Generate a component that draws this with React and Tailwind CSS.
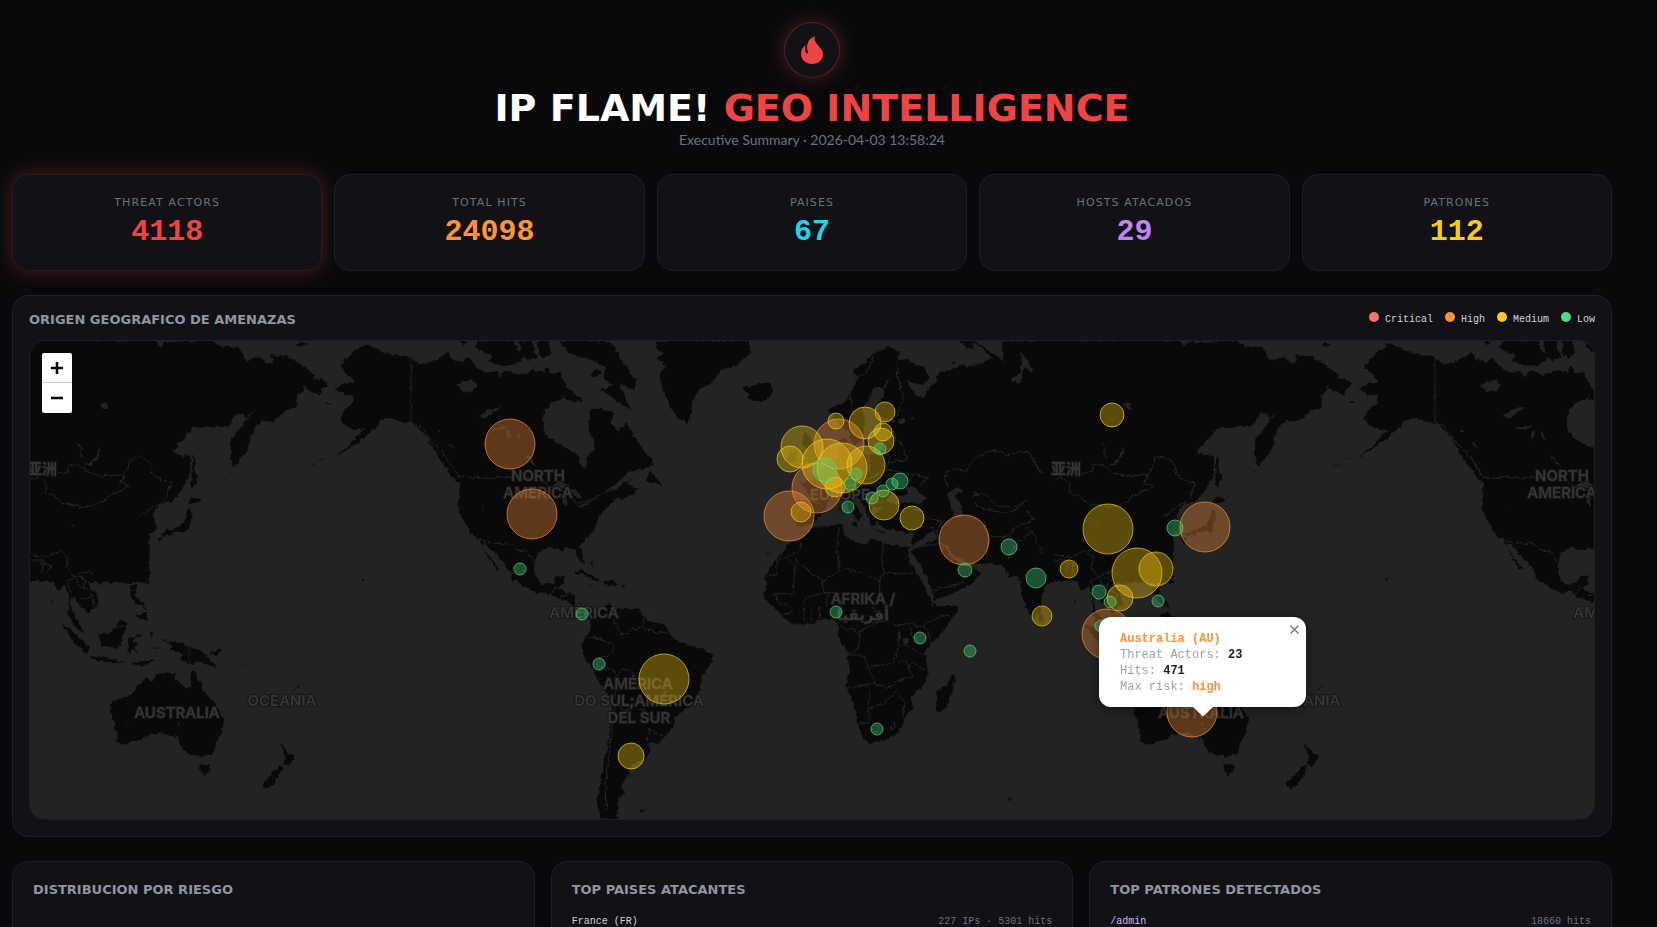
import { useState } from "react";

const stats = [
  { label: "Threat Actors", value: 4118, color: "text-[#ef4444]", glow: true },
  { label: "Total Hits", value: 24098, color: "text-[#ff9336]" },
  { label: "Paises", value: 67, color: "text-[#22d3ee]" },
  { label: "Hosts Atacados", value: 29, color: "text-[#c084fc]" },
  { label: "Patrones", value: 112, color: "text-[#facc15]" },
];

const legend = [
  { label: "Critical", color: "bg-[#f87171]" },
  { label: "High", color: "bg-[#fb923c]" },
  { label: "Medium", color: "bg-[#facc15]" },
  { label: "Low", color: "bg-[#4ade80]" },
];

const riskColors = {
  high: "#fb923c",
  medium: "#facc15",
  low: "#4ade80",
};

// [x, y, radius, risk]
const markers = [
  [787, 147, 25, "high"],
  [809, 103, 25, "high"],
  [759, 175, 25, "high"],
  [480, 103, 25, "high"],
  [502, 173, 25, "high"],
  [934, 199, 25, "high"],
  [1077, 293, 25, "high"],
  [1175, 186, 25, "high"],
  [1162, 371, 25, "high"],
  [797, 123, 25, "medium"],
  [812, 127, 25, "medium"],
  [634, 338, 25, "medium"],
  [1078, 188, 25, "medium"],
  [1107, 232, 25, "medium"],
  [772, 106, 21, "medium"],
  [836, 124, 19, "medium"],
  [1126, 228, 17, "medium"],
  [835, 82, 16, "medium"],
  [854, 164, 15, "medium"],
  [601, 415, 13, "medium"],
  [760, 118, 13, "medium"],
  [851, 100, 13, "medium"],
  [1090, 257, 13, "medium"],
  [882, 177, 12, "medium"],
  [1082, 74, 12, "medium"],
  [855, 71, 10, "medium"],
  [805, 146, 10, "medium"],
  [771, 171, 10, "medium"],
  [1012, 275, 10, "medium"],
  [1039, 228, 9, "medium"],
  [853, 91, 9, "medium"],
  [806, 80, 8, "medium"],
  [795, 129, 12, "low"],
  [1006, 237, 10, "low"],
  [979, 206, 8, "low"],
  [870, 140, 8, "low"],
  [1145, 187, 8, "low"],
  [935, 229, 7, "low"],
  [1069, 251, 7, "low"],
  [490, 228, 6, "low"],
  [552, 273, 6, "low"],
  [569, 323, 6, "low"],
  [850, 108, 6, "low"],
  [826, 133, 6, "low"],
  [820, 143, 6, "low"],
  [818, 166, 6, "low"],
  [842, 157, 6, "low"],
  [853, 150, 6, "low"],
  [862, 143, 6, "low"],
  [1080, 261, 6, "low"],
  [1128, 260, 6, "low"],
  [1071, 285, 6, "low"],
  [806, 271, 6, "low"],
  [890, 297, 6, "low"],
  [940, 310, 6, "low"],
  [847, 388, 6, "low"],
];

const mapLabels = [
  [508, 140, "NORTH"],
  [508, 157, "AMERICA"],
  [554, 277, "AMÉRICA"],
  [608, 348, "AMÉRICA"],
  [609, 365, "DO SUL;AMÉRICA"],
  [609, 382, "DEL SUR"],
  [810, 159, "EUROPE"],
  [833, 263, "AFRIKA /"],
  [833, 279, "أفريقيا"],
  [1036, 133, "亚洲"],
  [1171, 377, "AUSTRALIA"],
  [1276, 365, "OCEANIA"],
];

const LAND = "#090909";
const WATER = "#232323";
const BORDER = "#262626";

function FlameIcon() {
  return (
    <svg className="h-7 w-[22px]" viewBox="0 0 66 84" fill="#ef4444" aria-hidden="true">
      <path d="M42 0C38 14 46 22 54 31C62 40 66 47 66 54C66 72 51 84 33 84C15 84 0 71 0 54C0 43 5 33 14 27C11 37 11 47 16 51C20 54 22 50 20 45C14 26 22 8 42 0Z" />
    </svg>
  );
}

// Each continent group is drawn on its own 3x grid
function Americas() {
  return (
    <g transform="translate(370 -11) scale(0.33333)">
      <g fill={LAND}>
        <path d="M-180 110L-165 88L-145 76L-140 62L-120 55L-100 42L-80 52L-55 62L-20 74L20 77L33 86L60 100L80 103L110 86L145 66L155 90L175 92L185 98L205 82L225 108L255 128L290 124L300 140L320 120L360 135L400 120L430 128L440 110L455 130L480 125L490 150L500 165L495 190L480 210L455 218L436 240L428 270L430 300L447 325L470 335L495 350L530 372L548 412L560 410L562 380L582 360L582 330L565 300L568 270L570 238L600 236L640 248L635 280L655 305L680 278L690 300L720 345L740 378L760 385L760 405L730 418L690 425L660 450L640 470L620 490L645 480L690 448L705 440L690 462L705 478L722 475L700 488L665 510L650 505L640 515L620 535L600 550L590 575L585 600L560 625L540 650L552 695L542 700L525 655L500 655L480 660L440 652L410 670L402 705L405 740L425 765L460 760L470 740L495 738L488 765L470 775L500 788L525 795L525 830L545 850L575 860L590 840L610 832L630 822L635 832L660 835L715 835L725 852L750 875L790 880L810 910L825 930L860 945L900 952L935 970L938 995L905 1035L902 1080L885 1120L850 1140L825 1160L820 1190L790 1225L770 1243L740 1238L750 1260L740 1285L700 1300L685 1320L690 1335L660 1365L672 1385L655 1410L650 1440L655 1468L605 1468L590 1420L600 1370L610 1300L625 1240L632 1180L635 1110L600 1060L580 1020L545 970L548 935L570 905L575 870L545 860L520 828L500 812L460 800L440 785L415 788L380 775L335 745L335 730L295 680L255 640L245 645L275 690L300 718L290 718L265 685L240 630L215 615L185 560L175 535L180 460L150 430L120 390L80 320L40 280L33 278L0 275L-35 262L-60 272L-75 295L-110 325L-160 360L-200 385L-150 345L-120 310L-105 298L-135 300L-165 285L-180 270L-172 245L-140 220L-140 195L-170 195L-195 178L-165 160L-135 155L-150 140Z" />
        <path d="M225 50L235 36L270 32L345 32L350 60L372 70L362 95L340 105L310 108L265 95L275 75L240 62Z" />
        <path d="M178 32L205 32L190 46Z" />
        <path d="M358 32L398 32L402 60L412 80L385 92L365 70Z" />
        <path d="M415 32L445 32L452 70L432 85L414 72Z" />
        <path d="M475 32L610 32L642 50L662 90L710 150L705 182L680 170L660 160L690 235L665 225L635 200L598 180L640 165L612 148L615 110L575 90L540 82L505 65Z" />
        <path d="M498 165L520 190L550 212L520 215L492 205Z" />
        <path d="M768 32L1050 32L1050 70L1010 105L965 120L940 155L895 180L880 210L866 280L830 262L805 220L790 180L780 130L800 110L770 85L790 70L768 55Z" />
        <path d="M1030 168L1050 172L1075 160L1105 157L1120 180L1105 205L1075 217L1045 208L1058 192L1035 185Z" />
        <path d="M518 727L540 720L570 732L602 752L585 752L555 735Z" />
        <path d="M612 753L640 752L656 765L632 768L612 764Z" />
        <path d="M568 765L584 766L575 769ZM664 764L676 765L670 769Z" />
        <path d="M735 455L752 420L762 435L785 465L770 462L755 458Z" />
        <path d="M152 428L185 450L178 455L155 440Z" />
        <path d="M570 135L590 115L608 130L590 140ZM575 690L580 715L572 700Z" />
        <path d="M720 1440L740 1438L728 1446ZM-112 740L-105 756L-118 752Z" />
        <path d="M-230 385L-250 390L-232 382ZM-255 405L-272 407L-258 402Z" />
        <path d="M-310 45L-295 35L-280 44L-300 50ZM-225 215L-205 218L-215 222Z" />
      </g>
      <g fill={WATER}>
        <path d="M168 165L190 155L215 148L230 165L215 185L190 185Z" />
        <path d="M235 258L265 240L305 230L275 250L255 264Z" />
        <path d="M270 295L300 290L330 285L300 300ZM320 310L330 300L328 330ZM350 300L365 330L352 325Z" />
        <path d="M376 375L392 385L412 412L398 405Z" />
        <path d="M450 470L480 455L512 465L495 475L470 478Z" />
        <path d="M488 490L500 488L498 528L487 520Z" />
        <path d="M505 480L530 478L545 500L528 502Z" />
        <path d="M527 530L555 520L578 515L550 530Z" />
        <path d="M680 440L705 435L735 440L725 462L690 465Z" opacity="0.7" />
        <path d="M540 245L560 240L562 300L540 280Z" />
        <path d="M110 300L122 310L118 300ZM145 345L165 355L150 340ZM245 535L252 545L248 532Z" />
      </g>
      <g fill="none" stroke={BORDER} strokeWidth="3">
        <path d="M33 86L33 278L60 285L90 330L125 365L180 442L375 442L420 450L460 475L500 485L530 520L560 515L600 495L640 470L660 460L690 455" />
        <path d="M240 628L270 640L315 640L335 645L355 662L375 660L402 695" />
        <path d="M450 795L470 770M480 800L505 795M560 860L560 910M550 925L600 925L640 945L635 970L600 985L590 1010L635 1015L650 1035M575 915L620 940M640 870L665 915L690 905L720 890M740 850L725 890L770 910L800 905M650 1035L680 1015L720 1045L745 1095M650 1035L645 1100L670 1145L700 1130L740 1145L770 1165M640 1110L645 1150L632 1230L625 1300L615 1380L620 1440M745 1195L790 1220M750 1195L740 1235M770 1170L775 1145" />
      </g>
    </g>
  );
}

function AfricaEurope() {
  return (
    <g transform="translate(710 -11) scale(0.33333)">
      <g fill={LAND}>
        <path d="M225 590L255 588L300 585L312 590L308 612L345 635L380 645L395 625L430 640L490 650L510 650L512 670L500 675L530 730L560 780L580 815L590 832L652 825L650 845L610 905L575 940L555 965L563 1020L560 1055L515 1100L518 1140L495 1160L485 1190L460 1220L430 1232L385 1240L370 1225L355 1180L340 1120L318 1070L330 1020L318 960L295 920L298 890L285 872L250 865L215 880L160 885L130 860L100 830L70 800L78 770L75 735L110 685L135 660L150 635L180 630Z" />
        <path d="M640 1030L645 1050L625 1120L605 1148L588 1140L590 1085L620 1065Z" />
        <path d="M158 520L165 508L190 510L212 514L205 485L180 458L212 450L235 428L258 400L290 388L300 350L298 330L318 320L322 375L345 388L385 372L420 372L430 340L442 325L470 325L462 305L430 300L412 280L402 245L428 200L430 185L470 90L500 88L555 115L568 145L550 165L500 150L520 190L550 208L562 180L590 150L600 125L635 120L660 105L700 108L760 85L720 50L680 32L700 32L780 85L790 100L785 32L1300 32L1300 760L942 752L920 762L905 800L903 850L875 868L850 810L835 735L810 740L785 705L730 700L690 700L665 705L635 690L615 655L595 625L580 600L515 650L520 610L480 605L430 590L400 570L410 545L430 535L400 530L395 545L415 565L400 590L385 560L370 520L345 490L325 495L345 525L365 555L355 575L345 560L325 530L300 500L265 510L250 545L225 575L180 592L165 572Z" />
        <path d="M512 665L530 655L595 625L620 655L650 690L680 702L690 712L725 730L690 765L640 790L582 812L570 770L540 700Z" />
        <path d="M285 265L262 240L315 215L335 180L350 150L340 118L375 100L400 72L440 48L480 65L480 110L440 150L430 175L400 172L390 200L370 230L375 270L365 330L340 350L325 300L300 290Z" />
        <path d="M180 395L205 382L190 375L205 360L190 345L185 318L200 305L215 330L235 360L242 382L215 398Z" />
        <path d="M138 400L145 372L165 360L175 375L168 398Z" />
        <path d="M895 845L912 860L908 880L895 870Z" />
        <path d="M32 170L45 162L75 170L95 160L98 185L80 210L55 215L25 205Z" />
        <path d="M300 520L306 545L298 540ZM330 580L352 578L348 590ZM410 602L435 605L420 609ZM490 605L510 600L500 612Z" />
        <path d="M640 90L645 98L628 104ZM655 32L690 34L705 60L680 52Z" />
        <path d="M802 1405L815 1406L808 1414ZM73 672L98 670L80 676ZM156 238L158 243L154 241Z" />
      </g>
      <g fill={WATER}>
        <path d="M440 515L455 490L480 498L505 492L500 475L520 470L555 500L550 520L500 515L470 525Z" />
        <path d="M620 490L650 472L670 480L642 498L660 520L668 560L640 562L630 520Z" />
        <path d="M595 628L615 645L645 680L668 688L680 702L655 698L625 670Z" />
        <path d="M500 650L515 665L560 740L582 800L582 832L560 780L520 705Z" />
        <path d="M418 172L432 185L415 210L400 245L405 262L445 262L470 272L415 285L418 310L400 330L378 370L355 380L350 360L368 325L374 270L372 230L395 200Z" />
        <path d="M475 272L495 262L495 282L480 282ZM515 255L522 268L515 270Z" />
        <path d="M485 925L505 920L502 940L488 940Z" />
        <path d="M810 150L840 130L848 100L840 60L862 90L880 130L852 115L840 160Z" />
        <path d="M1150 348L1145 375L1105 405L1130 385Z" />
        <path d="M700 482L712 490L702 500Z" />
      </g>
      <g fill="none" stroke={BORDER} strokeWidth="3">
        <path d="M180 635L185 660L140 680L110 690L110 735L78 735M140 685L165 705L160 790L100 792M165 690L248 755L300 720L290 655L298 590M300 720L320 715L420 752L430 730L428 640M430 730L525 730M248 755L250 790L200 800L185 830M420 752L418 800L400 830L420 870L480 885L510 880L545 890L600 860L630 855M250 790L310 790L300 830L310 860L290 880M100 792L120 820L150 830L160 845L130 855M190 830L195 875M215 835L218 870M235 830L240 865M260 830L265 790M300 890L360 905L420 870M360 905L355 960L320 970M320 975L370 975L385 1010L430 1005L460 1000L475 950L480 900M475 950L500 945L520 960L555 975M385 1010L405 1060L318 1075M405 1060L440 1075L480 1050L520 1040L500 1010L520 1000L560 1020M390 1080L385 1120L388 1180L355 1180M388 1135L430 1120L470 1085M470 1085L495 1120L490 1160M450 1190L465 1178L465 1190L450 1198L450 1190M510 880L515 920L540 940M545 890L560 900L575 940M475 1000L500 990L505 1020" />
        <path d="M180 515L165 575M205 510L250 525M235 430L270 450L290 470L280 500M300 385L310 420L345 430L370 450L340 465L290 470M385 372L390 420L345 430M430 372L450 380L440 420L400 440L380 450M440 420L500 430L560 440L540 470M470 325L490 350L500 390L450 395M370 455L420 460L440 490M350 490L380 480L400 520L430 515M480 70L470 110L475 150L490 200L470 265M400 80L385 120L340 150L330 200L340 260M530 590L560 590L590 600L605 575L560 560L540 540L520 535M590 600L600 640L540 650M580 780L650 765L670 750L680 735M640 560L700 560L730 575L745 620L740 690M620 470L615 430L650 415L680 425L700 385L760 360L800 375L840 365L870 370L905 430L940 420L945 450L990 500L1030 518L1120 520L1170 490L1235 465L1205 440L1170 435L1110 440L1060 420L1030 430L940 430M690 500L730 490L780 530L830 530L860 510L830 540L800 550L740 540L700 520M860 540L880 570L830 590L800 620L750 620M860 590L885 620L900 655L985 680L1000 672L1040 665M800 690L820 660L830 640L870 610M900 655L900 665L960 690L985 690M990 690L1005 720L1000 740M1010 690L1000 700" />
        <path d="M965 80L985 90L990 110M975 105L1000 115" opacity="0.5" />
      </g>
    </g>
  );
}

function EastAsiaOceania() {
  return (
    <g transform="translate(994 -11) scale(0.33333)">
      <g fill={LAND}>
        <path d="M60 32L465 32L480 52L495 36L640 32L665 50L715 50L728 75L740 92L780 82L805 102L820 95L812 76L860 78L900 100L945 135L940 148L965 145L985 165L965 178L962 198L925 180L905 165L912 180L890 195L895 235L860 240L820 275L790 272L770 285L752 320L745 360L715 395L702 415L693 390L693 330L725 290L735 272L765 240L770 235L735 265L732 250L710 250L685 290L640 290L580 292L520 362L545 378L570 375L570 430L545 480L515 515L480 518L455 555L468 580L465 605L445 610L447 580L430 570L430 550L400 560L375 575L370 565L405 542L385 570L410 580L383 602L400 640L403 665L380 700L340 725L305 738L272 740L262 758L292 795L295 822L262 850L258 835L240 828L225 805L210 800L213 840L235 870L250 908L222 890L205 850L208 810L195 765L172 785L160 755L150 735L100 745L60 752Z" />
        <path d="M178 878L215 898L240 925L268 950L265 972L225 940L200 905Z" />
        <path d="M265 978L300 980L345 990L382 998L340 998L295 992Z" />
        <path d="M395 998L440 992L475 990L435 1005L400 1004Z" />
        <path d="M295 912L335 905L362 868L380 880L370 915L355 955L305 948Z" />
        <path d="M385 925L430 912L405 925L395 935L415 940L405 950L412 970L398 955L390 972L382 960Z" />
        <path d="M392 765L408 765L405 800L430 820L438 840L420 825L405 815L390 795ZM408 855L440 845L442 870L425 870ZM365 850L385 830L372 842Z" />
        <path d="M390 705L403 700L396 730ZM292 750L308 745L305 762L293 765Z" />
        <path d="M484 928L510 935L540 938L600 960L625 985L650 1013L605 998L570 1002L540 985L548 970L510 960L515 945Z" />
        <path d="M630 970L655 960L665 955L650 975L635 975ZM685 972L705 988L690 978ZM715 990L745 1015L725 1000Z" />
        <path d="M332 1125L345 1110L400 1092L410 1068L440 1045L455 1055L470 1035L480 1027L528 1030L525 1050L562 1078L570 1070L572 1030L579 1018L590 1045L605 1060L612 1090L640 1115L657 1140L673 1170L665 1210L648 1240L640 1270L605 1280L560 1270L545 1250L520 1220L480 1208L440 1215L420 1230L370 1243L347 1235L350 1215L342 1180L332 1150Z" />
        <path d="M598 1303L630 1305L628 1328L612 1338L602 1325Z" />
        <path d="M838 1238L855 1255L868 1275L886 1272L878 1292L862 1312L850 1300L856 1285Z" />
        <path d="M835 1305L852 1310L838 1335L820 1365L800 1374L786 1368L790 1355L815 1335Z" />
        <path d="M576 500L590 502L605 512L588 520L572 525L562 518Z" />
        <path d="M566 530L575 550L572 580L560 605L520 605L490 620L480 612L510 600L545 585L560 560Z" />
        <path d="M472 622L488 620L480 642ZM500 612L520 608L510 618Z" />
        <path d="M578 372L585 385L584 425L596 440L580 475L574 470L575 420Z" />
        <path d="M608 505L630 490L612 500ZM632 490L650 478L638 485ZM688 428L698 420L692 430Z" />
        <path d="M876 1078L888 1075L880 1084ZM890 1068L902 1066L893 1072ZM786 1055L795 1066L789 1060Z" />
        <path d="M450 910L460 905L456 930ZM450 950L480 950L460 954ZM155 805L157 825L153 815Z" />
      </g>
      <g fill={WATER}>
        <path d="M302 348L296 375L275 405L252 408L280 390L295 360Z" />
        <path d="M300 220L322 222L318 240L302 232ZM215 582L225 585L218 588Z" />
        <path d="M525 1215L535 1225L540 1250L530 1240ZM378 1183L388 1185L382 1188ZM535 1172L540 1190L533 1185Z" />
      </g>
      <g fill="none" stroke={BORDER} strokeWidth="3">
        <path d="M90 450L115 440L138 460L138 490L165 498L188 520L258 532L310 515L330 495L365 480L388 470L360 455L370 435L300 438L260 425L235 405L205 405L205 428L170 430M365 455L395 385L425 380L450 400L455 430L490 455L515 455L500 500L485 515L440 545L415 560" />
        <path d="M90 672L120 680L150 680L180 662L205 680L200 710L225 740L200 755L215 790M225 740L265 720L280 735M240 740L260 750L250 765L280 800L280 830M230 745L232 765L265 775M245 805L280 800M300 912L330 905L345 888L375 888M567 945L567 1000M120 700L150 705L140 730M90 690L130 690L128 725" />
        <path d="M232 340L245 355L240 370L248 385" />
      </g>
    </g>
  );
}

function MapLabels() {
  return (
    <g
      className="font-['Inter','Noto_Sans_CJK_SC','DejaVu_Sans',sans-serif] text-[15px] font-semibold"
      fill="#363636"
      stroke="#161616"
      strokeWidth="2"
      paintOrder="stroke"
      textAnchor="middle"
    >
      {mapLabels.map(([x, y, text]) => (
        <text key={`${x}-${y}`} x={x} y={y}>
          {text}
        </text>
      ))}
    </g>
  );
}

function WorldMap() {
  return (
    <svg
      className="absolute inset-0 h-full w-full"
      viewBox="0 0 1564 478"
      preserveAspectRatio="xMidYMid slice"
      role="img"
      aria-label="Origen geografico de amenazas"
    >
      <defs>
        <filter id="coast" x="0" y="0" width="100%" height="100%" colorInterpolationFilters="sRGB">
          <feTurbulence type="fractalNoise" baseFrequency="0.2" numOctaves="3" seed="4" />
          <feDisplacementMap
            in="SourceGraphic"
            scale="5"
            xChannelSelector="R"
            yChannelSelector="G"
          />
        </filter>
        <g id="world">
          <AfricaEurope />
          <EastAsiaOceania />
          <Americas />
        </g>
        <g id="labels">
          <MapLabels />
        </g>
      </defs>
      <g filter="url(#coast)">
        <rect x="-20" y="-20" width="1604" height="518" fill={WATER} />
        <use href="#world" x="-1024" />
        <use href="#world" />
        <use href="#world" x="1024" />
      </g>
      <use href="#labels" x="-1024" />
      <use href="#labels" />
      <use href="#labels" x="1024" />
      {markers.map(([x, y, r, risk]) => (
        <circle
          key={`${x}-${y}`}
          cx={x}
          cy={y}
          r={r}
          fill={riskColors[risk]}
          fillOpacity="0.35"
          stroke={riskColors[risk]}
          strokeOpacity="0.7"
        />
      ))}
    </svg>
  );
}

function MapPopup({ onClose }) {
  return (
    <div className="absolute top-[276px] left-1/2 ml-[287px] w-[207px]">
      <div className="rounded-xl bg-white px-[21px] pt-[14px] pb-3 font-['Liberation_Mono',monospace] text-[12px] leading-4 text-gray-400 shadow-[0_3px_14px_rgba(0,0,0,0.4)]">
        <p className="font-bold text-[#fb923c]">Australia (AU)</p>
        <p>
          Threat Actors: <b className="text-[#222222]">23</b>
        </p>
        <p>
          Hits: <b className="text-[#222222]">471</b>
        </p>
        <p>
          Max risk: <b className="text-[#fb923c]">high</b>
        </p>
      </div>
      <button
        onClick={onClose}
        aria-label="Close popup"
        className="absolute top-0 right-0 flex h-6 w-6 items-center justify-center text-[#757575]"
      >
        <svg className="h-[9px] w-[9px]" viewBox="0 0 9 9" stroke="currentColor" strokeWidth="1.3">
          <path d="M0.5 0.5L8.5 8.5M8.5 0.5L0.5 8.5" />
        </svg>
      </button>
      <svg className="mx-auto h-[10px] w-5" viewBox="0 0 20 10" fill="#ffffff" aria-hidden="true">
        <path d="M0 0H20L10 9.5Z" />
      </svg>
    </div>
  );
}

function ListPanel({ title, children }) {
  return (
    <section className="min-h-16 rounded-2xl border border-[#1e1e27] bg-[#111116] p-5">
      <h2 className="mb-4 font-['DejaVu_Sans',sans-serif] text-[13px] leading-4 font-bold text-[#8f95a1] uppercase">
        {title}
      </h2>
      {children}
    </section>
  );
}

export default function App() {
  const [popupOpen, setPopupOpen] = useState(true);

  return (
    <div className="h-screen overflow-hidden bg-[#09090b] pr-[45px] pl-3 text-[#d4d4d8]">
      {/* Header */}
      <header className="flex flex-col items-center pt-[22px] pb-6 text-center">
        <div className="flex h-14 w-14 items-center justify-center rounded-full border border-[#ef4444]/30 bg-[#111116] shadow-[0_0_20px_rgba(239,68,68,0.3)]">
          <FlameIcon />
        </div>
        <h1 className="mt-3 font-['DejaVu_Sans',sans-serif] text-[38px] leading-9 font-bold text-white">
          IP FLAME! <span className="text-[#ef4444]">GEO INTELLIGENCE</span>
        </h1>
        <p className="mt-1 font-['Lato',sans-serif] text-[14px] leading-5 text-gray-500">
          Executive Summary · 2026-04-03 13:58:24
        </p>
      </header>

      {/* Stats */}
      <div className="mb-6 grid grid-cols-5 gap-3">
        {stats.map((stat) => (
          <div
            key={stat.label}
            className={`rounded-2xl border border-[#1e1e27] bg-[#111116] p-5 text-center ${
              stat.glow ? "shadow-[0_0_20px_rgba(239,68,68,0.3)]" : ""
            }`}
          >
            <p className="mb-1 font-['DejaVu_Sans',sans-serif] text-[11px] leading-[15px] tracking-widest text-gray-500 uppercase">
              {stat.label}
            </p>
            <p
              className={`font-['Liberation_Mono',monospace] text-3xl leading-9 font-bold ${stat.color}`}
            >
              {stat.value}
            </p>
          </div>
        ))}
      </div>

      {/* Map */}
      <section className="mb-6 rounded-2xl border border-[#1e1e27] bg-[#111116] p-4">
        <div className="mb-3 flex h-4 items-center justify-between">
          <h2 className="font-['DejaVu_Sans',sans-serif] text-[13px] leading-4 font-bold text-[#8f95a1] uppercase">
            Origen Geografico de Amenazas
          </h2>
          <ul className="flex gap-3 font-['Liberation_Mono',monospace] text-[10px] leading-4">
            {legend.map((item) => (
              <li key={item.label} className="flex gap-1.5">
                <span className={`h-2.5 w-2.5 rounded-full ${item.color}`} />
                {item.label}
              </li>
            ))}
          </ul>
        </div>
        <div className="relative h-[480px] overflow-hidden rounded-2xl border border-[#1e1e27] bg-[#232323]">
          <WorldMap />
          <div className="absolute top-3 left-3 flex w-[30px] flex-col overflow-hidden rounded-xs bg-white text-black">
            <button
              aria-label="Zoom in"
              className="flex h-[30px] items-center justify-center border-b border-[#cccccc]"
            >
              <svg className="h-3 w-3" viewBox="0 0 12 12" stroke="currentColor" strokeWidth="2.5">
                <path d="M0 6H12M6 0V12" />
              </svg>
            </button>
            <button aria-label="Zoom out" className="flex h-[30px] items-center justify-center">
              <svg className="h-3 w-3" viewBox="0 0 12 12" stroke="currentColor" strokeWidth="2.5">
                <path d="M0 6H12" />
              </svg>
            </button>
          </div>
          {popupOpen && <MapPopup onClose={() => setPopupOpen(false)} />}
        </div>
      </section>

      {/* Breakdown */}
      <div className="grid grid-cols-3 gap-4 font-['Liberation_Mono',monospace] text-[10px] leading-4">
        <ListPanel title="Distribucion por Riesgo" />
        <ListPanel title="Top Paises Atacantes">
          <div className="flex justify-between">
            <span>France (FR)</span>
            <span className="text-gray-500">227 IPs · 5301 hits</span>
          </div>
        </ListPanel>
        <ListPanel title="Top Patrones Detectados">
          <div className="flex justify-between">
            <span className="text-[#d8b4fe]">/admin</span>
            <span className="text-gray-500">18660 hits</span>
          </div>
        </ListPanel>
      </div>
    </div>
  );
}
